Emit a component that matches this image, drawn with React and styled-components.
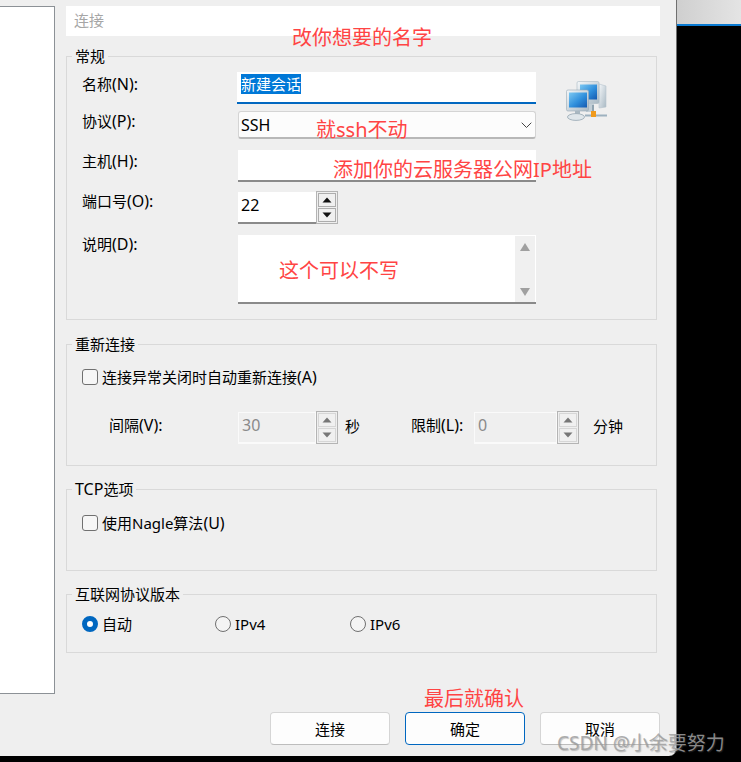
import React from 'react'
import styled, { createGlobalStyle } from 'styled-components'

const GlobalStyle = createGlobalStyle`
  html, body {
    margin: 0;
    padding: 0;
    background: #000;
  }
  * {
    box-sizing: border-box;
  }
`

const UpArrow = ({ color = '#111' }) => (
  <svg width="10" height="6" viewBox="0 0 10 6"><path d="M5 0.5 L9.5 5.5 L0.5 5.5 Z" fill={color} /></svg>
)

const DownArrow = ({ color = '#111' }) => (
  <svg width="10" height="6" viewBox="0 0 10 6"><path d="M0.5 0.5 L9.5 0.5 L5 5.5 Z" fill={color} /></svg>
)

const Spinner = ({ value, width, disabled }) => (
  <SpinWrap>
    <SpinInput $width={width} $disabled={disabled}>{value}</SpinInput>
    <SpinButtons>
      <SpinButton $disabled={disabled}><UpArrow color={disabled ? '#777' : '#111'} /></SpinButton>
      <SpinButton $disabled={disabled}><DownArrow color={disabled ? '#777' : '#111'} /></SpinButton>
    </SpinButtons>
  </SpinWrap>
)

const NetworkIcon = () => (
  <IconBox width="42" height="42" viewBox="0 0 42 42">
    <defs>
      <linearGradient id="screen" x1="0" y1="0" x2="1" y2="1">
        <stop offset="0" stopColor="#7cc8f2" />
        <stop offset="0.55" stopColor="#2f8fdc" />
        <stop offset="1" stopColor="#1459b0" />
      </linearGradient>
      <linearGradient id="shell" x1="0" y1="0" x2="1" y2="1">
        <stop offset="0" stopColor="#f4f7f9" />
        <stop offset="1" stopColor="#a9b9c4" />
      </linearGradient>
    </defs>
    <path d="M33 4 L40 6 L40 27 L33 28 Z" fill="url(#shell)" stroke="#b5c3cc" strokeWidth="0.6" />
    <rect x="11" y="1.5" width="22" height="22" rx="1.5" fill="url(#shell)" stroke="#a9b8c2" strokeWidth="0.6" />
    <rect x="14" y="4.5" width="17" height="15" fill="url(#screen)" />
    <rect x="20" y="24" width="8" height="8" fill="#c2ced6" />
    <rect x="0.5" y="10" width="22" height="21" rx="1.5" fill="url(#shell)" stroke="#98a9b5" strokeWidth="0.6" />
    <rect x="3" y="12.5" width="18" height="15" fill="url(#screen)" />
    <rect x="9" y="31" width="5" height="4" fill="#a8b7c1" />
    <ellipse cx="10" cy="37" rx="8.5" ry="3.4" fill="#dfe6ea" stroke="#95a6b1" strokeWidth="0.8" />
    <rect x="19" y="34.5" width="22" height="2" fill="#9db1bf" />
    <rect x="25" y="31" width="5" height="6" fill="#f09a1c" />
    <rect x="26" y="25" width="2" height="6" fill="#8fa3b0" />
  </IconBox>
)

const App = () => (
  <Page>
    <GlobalStyle />
    <Dialog>
      <LeftPanel />
      <Content>
        <TitleInput>连接</TitleInput>

        <Group $height={274}>
          <Legend>常规</Legend>
          <GeneralBody>
            <Fields>
              <FieldRow $top={6}>
                <FieldLabel $offset={3}>名称<Latin>(N):</Latin></FieldLabel>
                <NameInput><Selected>新建会话</Selected></NameInput>
              </FieldRow>
              <FieldRow $top={7}>
                <FieldLabel $offset={1}>协议<Latin>(P):</Latin></FieldLabel>
                <SelectBox>
                  <Latin>SSH</Latin>
                  <Chevron width="11" height="7" viewBox="0 0 11 7">
                    <path d="M0.7 0.7 L5.5 5.5 L10.3 0.7" fill="none" stroke="#444" strokeWidth="1" />
                  </Chevron>
                </SelectBox>
              </FieldRow>
              <FieldRow $top={11}>
                <FieldLabel $offset={2}>主机<Latin>(H):</Latin></FieldLabel>
                <TextInput />
              </FieldRow>
              <FieldRow $top={10}>
                <FieldLabel $offset={0}>端口号<Latin>(O):</Latin></FieldLabel>
                <Spinner value="22" width={78} />
              </FieldRow>
              <FieldRow $top={11}>
                <FieldLabel $offset={0}>说明<Latin>(D):</Latin></FieldLabel>
                <TextArea>
                  <ScrollBar>
                    <UpArrowLarge />
                    <DownArrowLarge />
                  </ScrollBar>
                </TextArea>
              </FieldRow>
            </Fields>
            <NetworkIcon />
          </GeneralBody>
        </Group>

        <Group $height={132} $top={14}>
          <Legend>重新连接</Legend>
          <CheckRow $top={14}>
            <CheckBox />
            <span>连接异常关闭时自动重新连接<Latin>(A)</Latin></span>
          </CheckRow>
          <IntervalRow>
            <IntervalLabel $width={129}>间隔<Latin>(V):</Latin></IntervalLabel>
            <Spinner value="30" width={78} disabled />
            <IntervalLabel $width={15} $left={7}>秒</IntervalLabel>
            <IntervalLabel $width={63} $left={51}>限制<Latin>(L):</Latin></IntervalLabel>
            <Spinner value="0" width={83} disabled />
            <IntervalLabel $width={32} $left={14}>分钟</IntervalLabel>
          </IntervalRow>
        </Group>

        <Group $height={92} $top={13}>
          <Legend><Latin>TCP</Latin>选项</Legend>
          <CheckRow $top={15}>
            <CheckBox />
            <span>使用Nagle算法<Latin>(U)</Latin></span>
          </CheckRow>
        </Group>

        <Group $height={69} $top={13}>
          <Legend>互联网协议版本</Legend>
          <RadioRow>
            <RadioItem $width={133}><Radio $checked />自动</RadioItem>
            <RadioItem $width={135}><Radio />IPv4</RadioItem>
            <RadioItem $width={100}><Radio />IPv6</RadioItem>
          </RadioRow>
        </Group>

        <Buttons>
          <DialogButton>连接</DialogButton>
          <DialogButton $primary>确定</DialogButton>
          <DialogButton>取消</DialogButton>
        </Buttons>
      </Content>
    </Dialog>
    <SideStrip />

    <Note $x={292} $y={25}>改你想要的名字</Note>
    <Note $x={316} $y={117}>就ssh不动</Note>
    <Note $x={333} $y={157}>添加你的云服务器公网IP地址</Note>
    <Note $x={279} $y={258}>这个可以不写</Note>
    <Note $x={424} $y={686}>最后就确认</Note>
    <Watermark>CSDN @小余要努力</Watermark>
  </Page>
)

export default App

const Page = styled.div`
  position: relative;
  width: 741px;
  height: 762px;
  background: #000;
  display: flex;
  align-items: flex-start;
  overflow: hidden;
  font-family: "Noto Sans", "Noto Sans CJK SC", sans-serif;
  font-size: 15px;
  color: #000;
`

const Latin = styled.span`
  font-size: 16px;
`

const Dialog = styled.div`
  width: 677px;
  height: 756px;
  background: #efefef;
  border-right: 1px solid #707070;
  border-bottom-right-radius: 8px;
  display: flex;
  flex-shrink: 0;
`

const SideStrip = styled.div`
  flex: 1;
  height: 26px;
  background: linear-gradient(90deg, #cfcfcf 0%, #e4e4e4 100%);
  border-bottom: 2px solid #0a7ad1;
`

const LeftPanel = styled.div`
  width: 55px;
  height: 688px;
  margin-top: 6px;
  background: #fff;
  border-top: 1px solid #8c9196;
  border-right: 1px solid #8c9196;
  border-bottom: 1px solid #8c9196;
  flex-shrink: 0;
`

const Content = styled.div`
  width: 594px;
  margin-left: 11px;
  padding-top: 6px;
`

const TitleInput = styled.div`
  height: 30px;
  background: #fff;
  color: #a6a6a6;
  padding-left: 8px;
  line-height: 29px;
  font-size: 15px;
`

const Group = styled.fieldset`
  width: 591px;
  height: ${p => p.$height}px;
  margin: ${p => p.$top ?? 10}px 0 0;
  padding: 0;
  min-width: 0;
  border: 1px solid #d9d9d9;
`

const Legend = styled.legend`
  margin-left: 5px;
  padding: 0 3px;
  height: 20px;
  line-height: 20px;
  font-size: 15px;
`

const GeneralBody = styled.div`
  display: flex;
  align-items: flex-start;
`

const Fields = styled.div`
  width: 469px;
  padding-left: 15px;
`

const FieldRow = styled.div`
  display: flex;
  align-items: flex-start;
  margin-top: ${p => p.$top}px;
`

const FieldLabel = styled.div`
  width: 156px;
  flex-shrink: 0;
  line-height: 18px;
  padding-top: ${p => p.$offset}px;
`

const NameInput = styled.div`
  width: 299px;
  height: 32px;
  margin-left: -1px;
  padding: 2px 0 0 4px;
  background: #fff;
  border-bottom: 2px solid #0067c0;
`

const Selected = styled.span`
  display: inline-block;
  height: 20px;
  line-height: 20px;
  background: #0078d7;
  color: #fff;
`

const SelectBox = styled.div`
  width: 298px;
  height: 28px;
  padding-left: 2px;
  line-height: 28px;
  background: #fcfcfc;
  border: 1px solid #d4d4d4;
  border-bottom: 2px solid #b8b8b8;
  border-radius: 3px;
  display: flex;
  align-items: center;
  justify-content: space-between;
`

const Chevron = styled.svg`
  margin-right: 3px;
  margin-top: 1px;
`

const TextInput = styled.div`
  width: 298px;
  height: 32px;
  background: #fff;
  border-bottom: 2px solid #8a8a8a;
`

const TextArea = styled.div`
  width: 298px;
  height: 69px;
  padding: 1px 1px 0 0;
  background: #fff;
  border-bottom: 2px solid #8a8a8a;
  display: flex;
  justify-content: flex-end;
`

const ScrollBar = styled.div`
  width: 20px;
  height: 66px;
  background: #f0f0f0;
  display: flex;
  flex-direction: column;
  align-items: center;
  justify-content: space-between;
  padding: 7px 0 6px;
`

const UpArrowLarge = styled.div`
  width: 0;
  height: 0;
  border-left: 5px solid transparent;
  border-right: 5px solid transparent;
  border-bottom: 8px solid #a0a0a0;
`

const DownArrowLarge = styled.div`
  width: 0;
  height: 0;
  border-left: 5px solid transparent;
  border-right: 5px solid transparent;
  border-top: 8px solid #a0a0a0;
`

const IconBox = styled.svg`
  margin: 14px 0 0 30px;
  flex-shrink: 0;
`

const SpinWrap = styled.div`
  display: flex;
  align-items: flex-start;
`

const SpinInput = styled.div`
  width: ${p => p.$width}px;
  height: 32px;
  padding-left: 3px;
  line-height: ${p => (p.$disabled ? 24 : 26)}px;
  font-size: 16px;
  background: ${p => (p.$disabled ? '#efefef' : '#fff')};
  color: ${p => (p.$disabled ? '#8a8a8a' : '#000')};
  border: ${p => (p.$disabled ? '1px solid #fafafa' : 'none')};
  border-bottom: 2px solid ${p => (p.$disabled ? '#fafafa' : '#8a8a8a')};
`

const SpinButtons = styled.div`
  width: 22px;
  height: 33px;
  margin-top: -1px;
  border: 1px solid #b4b4b4;
  padding: 1px;
  display: flex;
  flex-direction: column;
  gap: 1px;
`

const SpinButton = styled.div`
  flex: 1;
  display: flex;
  align-items: center;
  justify-content: center;
  background: #f0f0f0;
  border: 1px solid ${p => (p.$disabled ? '#d6d6d6' : '#adadad')};
`

const CheckRow = styled.label`
  display: flex;
  align-items: center;
  gap: 4px;
  height: 18px;
  line-height: 18px;
  margin: ${p => p.$top}px 0 0 15px;
`

const CheckBox = styled.span`
  width: 16px;
  height: 16px;
  background: #f6f6f6;
  border: 1px solid #707070;
  border-radius: 3px;
  flex-shrink: 0;
`

const IntervalRow = styled.div`
  display: flex;
  align-items: center;
  margin-top: 26px;
  padding-left: 42px;
`

const IntervalLabel = styled.div`
  width: ${p => p.$width}px;
  margin-left: ${p => p.$left ?? 0}px;
  padding-bottom: 6px;
  flex-shrink: 0;
  white-space: nowrap;
`

const RadioRow = styled.div`
  display: flex;
  align-items: center;
  height: 18px;
  margin: 11px 0 0 15px;
`

const RadioItem = styled.label`
  width: ${p => p.$width}px;
  display: flex;
  align-items: center;
  gap: 4px;
  line-height: 18px;
`

const Radio = styled.span`
  width: 16px;
  height: 16px;
  border-radius: 50%;
  flex-shrink: 0;
  background: ${p => (p.$checked ? '#fff' : '#f4f4f4')};
  border: ${p => (p.$checked ? '5px solid #0067c0' : '1px solid #707070')};
`

const Buttons = styled.div`
  display: flex;
  gap: 15px;
  margin: 59px 0 0 204px;
`

const DialogButton = styled.button`
  width: 120px;
  height: 33px;
  padding: 0;
  font: inherit;
  color: #000;
  background: #fdfdfd;
  border: 1px solid ${p => (p.$primary ? '#0067c0' : '#d5d5d5')};
  border-bottom-color: ${p => (p.$primary ? '#0067c0' : '#bdbdbd')};
  border-radius: 4px;
`

const Note = styled.div`
  position: absolute;
  left: ${p => p.$x}px;
  top: ${p => p.$y}px;
  font-size: 20px;
  line-height: 26px;
  color: #ff4444;
  white-space: nowrap;
`

const Watermark = styled.div`
  position: absolute;
  left: 557px;
  top: 729px;
  font-size: 19px;
  line-height: 28px;
  color: rgba(160, 160, 160, 0.85);
  text-shadow: 1px 1px 1px rgba(90, 90, 90, 0.35);
  white-space: nowrap;
`
